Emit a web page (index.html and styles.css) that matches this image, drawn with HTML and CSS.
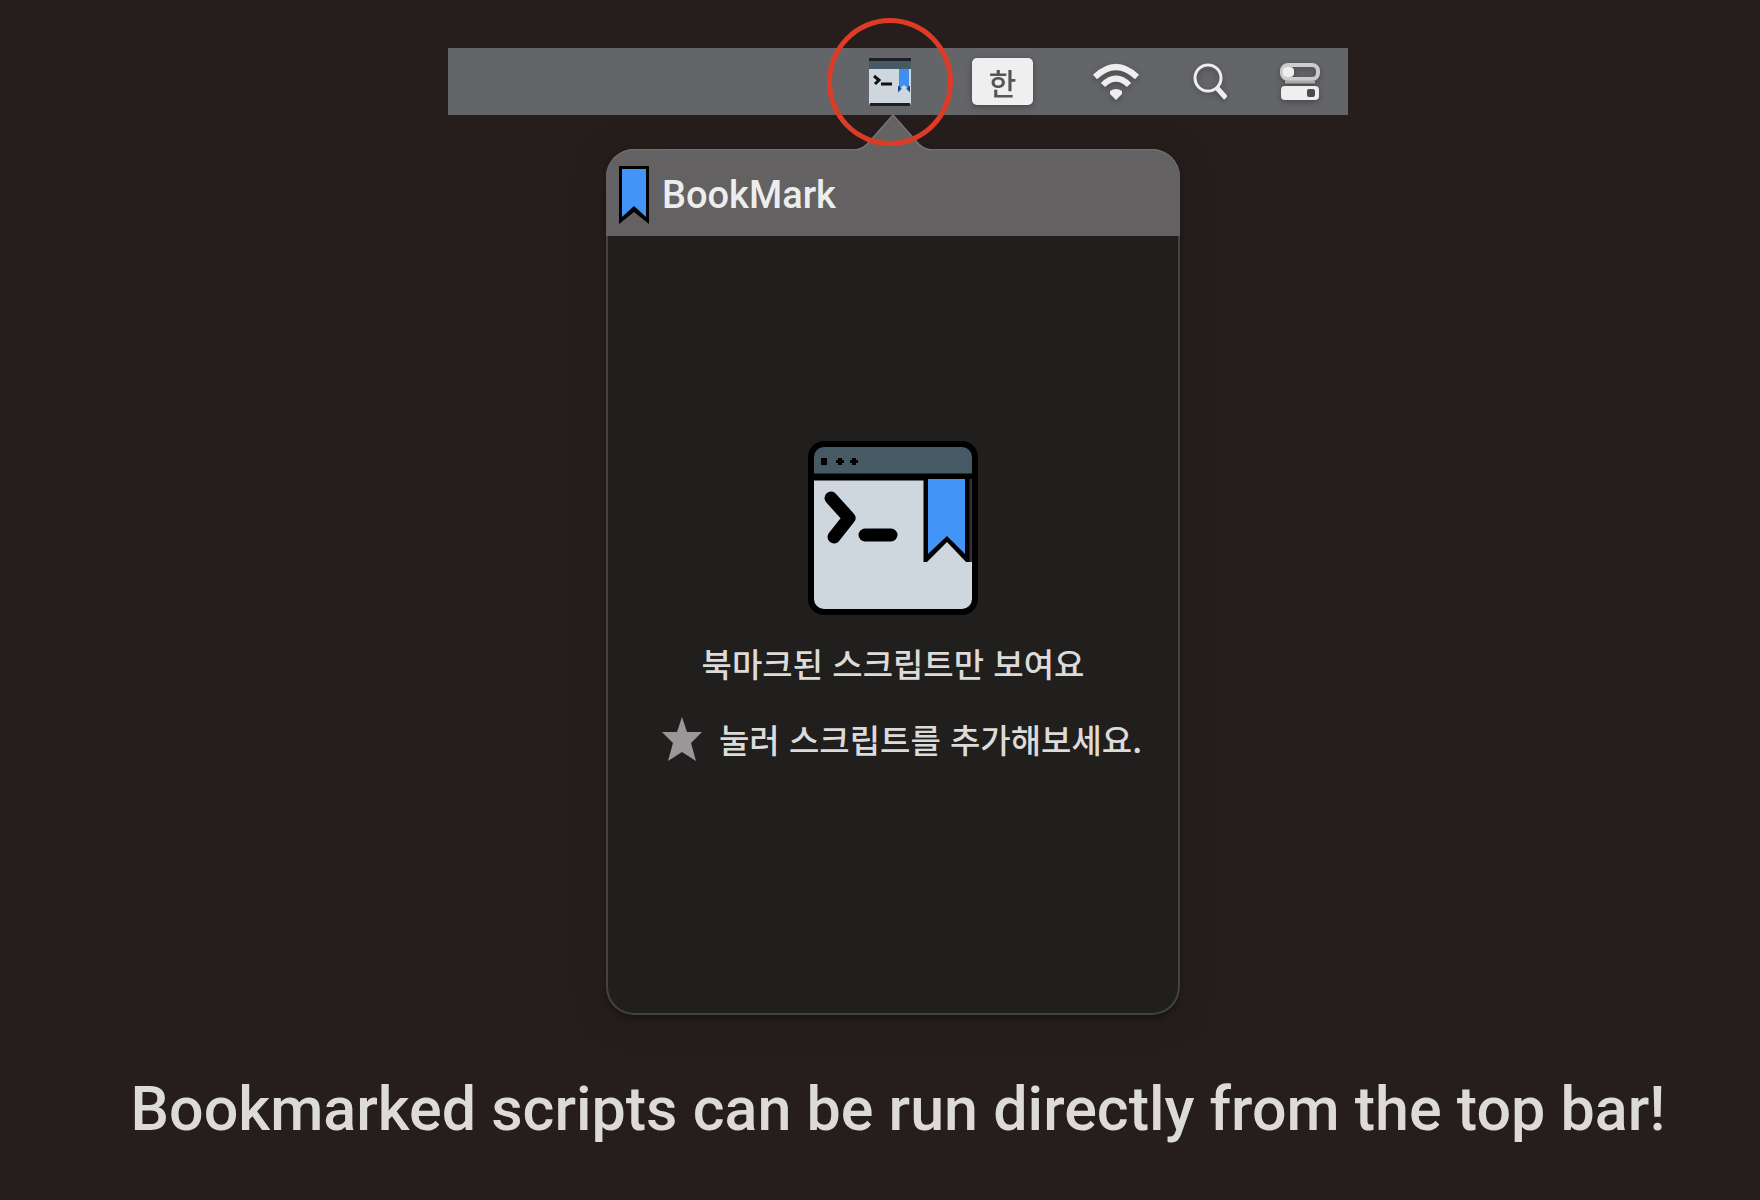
FILE: index.html
```html
<!DOCTYPE html>
<html lang="en">
<head>
<meta charset="utf-8">
<meta name="viewport" content="width=device-width, initial-scale=1">
<title>BookMark</title>
<link rel="stylesheet" href="styles.css">
</head>
<body>
<main class="page">
  <nav class="menu-bar" aria-label="Menu bar">
    <button class="item item-app" type="button" aria-label="BookMark">
      <svg class="app-icon" viewBox="0 0 44 48" aria-hidden="true">
        <rect x="1" y="1" width="42" height="46" rx="2" fill="#cfd7de"/>
        <path d="M1 11V3Q1 1 3 1H41Q43 1 43 3V11Z" fill="#465a65"/>
        <path d="M1 1.500H43M2 46.500H42" stroke="#1d1f21" stroke-width="3"/>
        <path d="M31 11V31L36 27L41 31V11Z" fill="#3f8ff0"/>
        <path d="M31 28V32L33 30M41 28V32L39 30" fill="none" stroke="#1c4d86" stroke-width="2"/>
        <path d="M6 18L11 22L7 26" fill="none" stroke="#111" stroke-width="3"/>
        <path d="M13 26H24" stroke="#111" stroke-width="3"/>
      </svg>
      <span class="highlight"></span>
    </button>
    <button class="item item-input" type="button">한</button>
    <button class="item" type="button" aria-label="Wi-Fi">
      <svg width="48" height="38" viewBox="0 0 48 38" aria-hidden="true">
        <path d="M3 14Q24 -6 45 14M11 22Q24 9 37 22" fill="none" stroke="#eee" stroke-width="6"/>
        <path d="M18 28Q24 24 30 28V31L24 37L18 31Z" fill="#eee"/>
      </svg>
    </button>
    <button class="item" type="button" aria-label="Search">
      <svg width="34" height="38" viewBox="0 0 34 38" aria-hidden="true">
        <circle cx="15" cy="15" r="13" fill="none" stroke="#eee" stroke-width="3"/>
        <path d="M24 25L33 35" stroke="#eee" stroke-width="5"/>
      </svg>
    </button>
    <button class="item" type="button" aria-label="Control Center">
      <svg width="40" height="38" viewBox="0 0 40 38" aria-hidden="true">
        <rect x="2" y="2" width="36" height="14" rx="6" fill="none" stroke="#ccc" stroke-width="4"/>
        <rect x="3" y="4" width="11" height="10" rx="4" fill="#eee"/>
        <path d="M5 19H35" stroke="#aaa" stroke-width="3"/>
        <rect x="1" y="23" width="38" height="14" rx="4" fill="#eee"/>
        <rect x="27" y="26" width="8" height="8" rx="2" fill="#4b4b4c"/>
      </svg>
    </button>
  </nav>

  <section class="popover" aria-label="BookMark">
    <svg class="arrow" viewBox="0 0 76 36" aria-hidden="true">
      <path d="M0 36Q9 34 15 26L38 0L61 26Q67 34 76 36Z" fill="#656263"/>
      <path d="M0 35Q9 34 15 26L38 0L61 26Q67 34 76 35" fill="none" stroke="#777475" stroke-width="1.500"/>
    </svg>
    <header class="popover-header">
      <svg class="ribbon" viewBox="0 0 30 58" aria-hidden="true">
        <path d="M0 0H30V58L15 46L0 58Z" fill="#000"/>
        <path d="M3 3H27V51L15 40L3 51Z" fill="#4294f7"/>
      </svg>
      <h1 class="title">BookMark</h1>
    </header>
    <div class="empty" lang="ko">
      <svg class="hero" viewBox="0 0 170 174" aria-hidden="true">
        <rect x="3" y="3" width="164" height="168" rx="13" fill="#cfd7de"/>
        <path d="M3 34V16Q3 3 16 3H154Q167 3 167 16V34Z" fill="#465a65"/>
        <path d="M3 36H167" stroke="#000" stroke-width="7"/>
        <path d="M13 17h6v7h-6zM28 19h2v-2h4v2h2v3h-2v2h-4v-2h-2zM42 19h2v-2h4v2h2v3h-2v2h-4v-2h-2z" fill="#000"/>
        <path d="M118 38V116L139 98L160 116V38Z" fill="#4294f7"/>
        <path d="M115.500 38V121H119L139 101L158 121H162V38H157V113L139 95L120 113V38Z" fill="#000"/>
        <path d="M163 38V121" stroke="#333" stroke-width="3"/>
        <path d="M23 57L41 77L26 96" fill="none" stroke="#000" stroke-width="13" stroke-linecap="round" stroke-linejoin="round"/>
        <path d="M57 94H83" stroke="#000" stroke-width="13" stroke-linecap="round"/>
        <rect x="3" y="3" width="164" height="168" rx="13" fill="none" stroke="#000" stroke-width="6"/>
      </svg>
      <p class="line">북마크된 스크립트만 보여요</p>
      <p class="line line-star">
        <svg class="star" viewBox="0 0 40 44" aria-hidden="true">
          <path d="M20 0L25 15H40L29 26L34 44L20 35L6 44L11 26L0 15H15Z" fill="#9b9798"/>
        </svg>
        <span>눌러 스크립트를 추가해보세요.</span>
      </p>
    </div>
  </section>

  <p class="caption">Bookmarked scripts can be run directly from the top bar!</p>
</main>
</body>
</html>
```
FILE: styles.css
```css
* {
  box-sizing: border-box;
}

body {
  margin: 0;
  background: #261e1d;
  color: #dddbda;
  font-family: Roboto, "Noto Sans CJK KR", sans-serif;
}

h1,
p {
  margin: 0;
}

.page {
  display: flex;
  flex-direction: column;
  align-items: center;
  min-height: 100vh;
  padding: 48px 0 40px 36px;
}

.menu-bar {
  display: flex;
  align-items: center;
  justify-content: flex-end;
  gap: 53px;
  width: 100%;
  max-width: 900px;
  height: 67px;
  padding-right: 28px;
  background: #646569;
}

.item {
  display: flex;
  padding: 0;
  border: 0;
  background: none;
  filter: drop-shadow(0 2px 3px rgba(0, 0, 0, 0.3));
}

.item-app {
  position: relative;
  z-index: 1;
  margin-right: 7px;
  filter: none;
}

.app-icon {
  width: 44px;
  height: 48px;
}

.highlight {
  position: absolute;
  inset: -40px -41px;
  border: 5px solid #de3b26;
  border-radius: 50%;
}

.item-input {
  align-items: center;
  justify-content: center;
  width: 61px;
  height: 47px;
  margin-right: 6px;
  border-radius: 5px;
  background: #efefef;
  color: #555;
  font: 500 30px/44px "Noto Sans CJK KR", sans-serif;
}

.popover {
  position: relative;
  width: 100%;
  max-width: 574px;
  margin: 34px 10px 0 0;
  border: 2px solid #444243;
  border-top: 0;
  border-radius: 28px;
  background: #211f1e;
  box-shadow: 0 4px 30px rgba(26, 26, 20, 0.6), 0 3px 4px rgba(15, 10, 10, 0.5);
}

.arrow {
  position: absolute;
  top: -34px;
  left: calc(50% - 38px);
  width: 76px;
  height: 36px;
}

.popover-header {
  display: flex;
  align-items: center;
  gap: 13px;
  height: 87px;
  margin: 0 -2px;
  padding: 4px 13px 0;
  border-radius: 28px 28px 0 0;
  background: #646162;
  box-shadow: inset 0 1px 1px #777475;
}

.ribbon {
  width: 30px;
  height: 58px;
}

.title {
  color: #eeedee;
  font-size: 38px;
  font-weight: 500;
  line-height: 48px;
}

.empty {
  display: flex;
  flex-direction: column;
  align-items: center;
  min-height: 777px;
  padding-top: 205px;
}

.hero {
  width: 170px;
  height: 174px;
  margin-bottom: 24px;
}

.line {
  font: 500 33px/48px "Noto Sans CJK KR", sans-serif;
}

.line-star {
  display: flex;
  align-items: center;
  gap: 17px;
  margin: 28px 0 0 18px;
}

.star {
  width: 40px;
  height: 44px;
}

.caption {
  margin-top: 54px;
  font-size: 61px;
  font-weight: 500;
  line-height: 80px;
  text-align: center;
}
```
